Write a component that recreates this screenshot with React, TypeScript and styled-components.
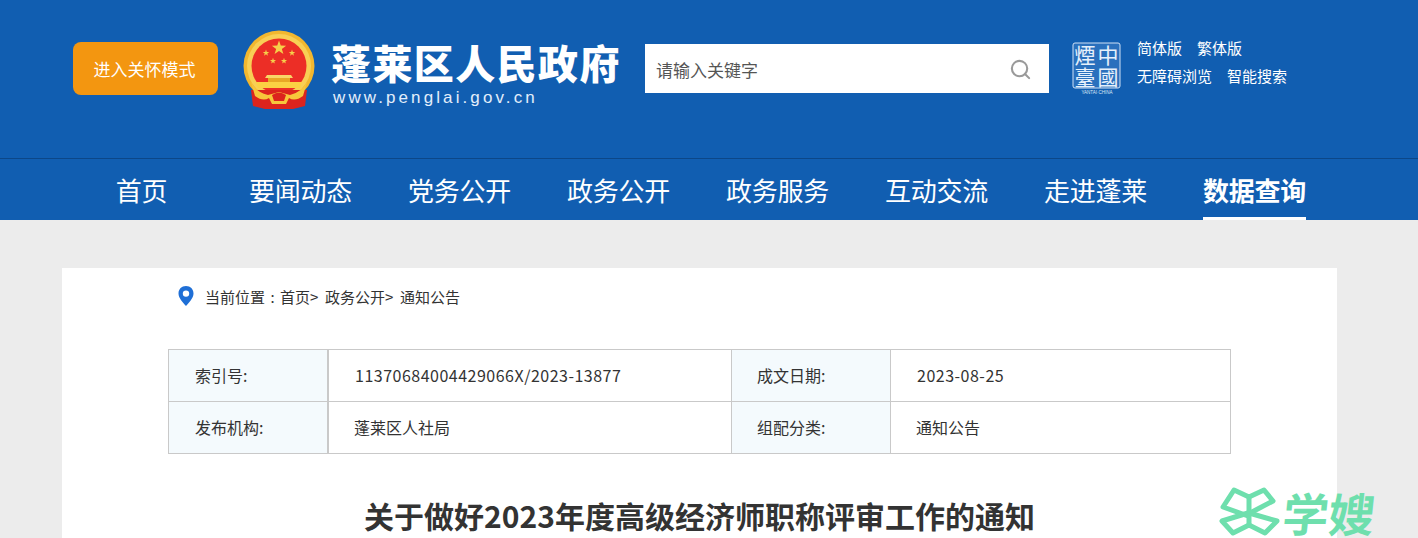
import styled, { createGlobalStyle } from "styled-components";
import { Search } from "lucide-react";

const GlobalStyle = createGlobalStyle`
  html, body {
    margin: 0;
    padding: 0;
    height: 538px;
    overflow: hidden;
    background: #ececec;
    font-family: "Noto Sans CJK SC", "Liberation Sans", sans-serif;
  }
`;

const Page = styled.div`
  position: relative;
  width: 1418px;
  height: 538px;
  overflow: hidden;
`;

const Header = styled.header`
  height: 158px;
  box-sizing: border-box;
  background: #115eb1;
  display: flex;
  align-items: flex-start;
  padding: 30px 0 0 73px;
  color: #fff;
`;

const CareButton = styled.a`
  width: 145px;
  height: 53px;
  box-sizing: border-box;
  margin-top: 12px;
  padding-right: 2px;
  border-radius: 8px;
  background: #f39610;
  display: flex;
  align-items: center;
  justify-content: center;
  font-size: 17px;
  color: #fff;
`;

const Emblem = styled.svg`
  width: 74px;
  height: 80px;
  margin: 0 0 0 25px;
  flex: none;
`;

const Brand = styled.div`
  margin: 7px 0 0 14px;
  width: 314px;
  flex: none;
`;

const BrandName = styled.div`
  font-size: 40px;
  line-height: 50px;
  font-weight: 900;
  letter-spacing: 1.4px;
  white-space: nowrap;
`;

const BrandUrl = styled.div`
  font-family: "Liberation Sans", sans-serif;
  font-size: 17px;
  line-height: 20px;
  letter-spacing: 3.1px;
  margin: 1px 0 0 2px;
  color: #e3eefb;
  white-space: nowrap;
`;

const SearchBox = styled.div`
  width: 404px;
  height: 49px;
  margin: 14px 0 0 0;
  box-sizing: border-box;
  background: #fff;
  display: flex;
  align-items: center;
  justify-content: space-between;
  padding: 2px 17px 0 11px;
  font-size: 17px;
  color: #555;
  flex: none;
`;

const Seal = styled.svg`
  width: 50px;
  height: 54px;
  margin: 12px 0 0 23px;
  flex: none;
`;

const QuickLinks = styled.div`
  margin: 7px 0 0 15px;
  display: flex;
  flex-direction: column;
  gap: 7px;
`;

const LinkRow = styled.div`
  display: flex;
  gap: 15px;
  font-size: 15px;
  line-height: 21px;
`;

const NavBar = styled.nav`
  height: 62px;
  box-sizing: border-box;
  border-top: 1px solid #0c4788;
  background: #115eb1;
  display: flex;
  padding-left: 62px;
`;

const NavItem = styled.div`
  width: 159px;
  display: flex;
  justify-content: center;
`;

const NavLabel = styled.a<{ $active?: boolean }>`
  height: 61px;
  box-sizing: border-box;
  font-size: 26px;
  line-height: 62px;
  letter-spacing: -0.3px;
  color: #fff;
  font-weight: ${(p) => (p.$active ? 700 : 400)};
  border-bottom: 3px solid ${(p) => (p.$active ? "#fff" : "transparent")};
`;

const Card = styled.main`
  margin: 48px 0 0 62px;
  width: 1275px;
  height: 400px;
  box-sizing: border-box;
  background: #fff;
  padding: 15px 106px 0;
`;

const Crumbs = styled.div`
  display: flex;
  align-items: center;
  height: 26px;
  font-size: 15px;
  color: #333;
  white-space: nowrap;
`;

const CrumbSep = styled.span`
  width: 15px;
  flex: none;
`;

const CrumbColon = styled.span`
  width: 15px;
  flex: none;
  text-align: center;
`;

const PinIcon = styled.svg`
  width: 16px;
  height: 20px;
  margin: 0 11px 0 10px;
  flex: none;
`;

const InfoTable = styled.div`
  margin-top: 40px;
  width: 1063px;
  box-sizing: border-box;
  border: 1px solid #c9c9c9;
  border-bottom: 0;
  display: grid;
  grid-template-columns: 160px 403px 159px 1fr;
  grid-auto-rows: 52px;
  font-size: 16px;
  color: #333;
`;

const Cell = styled.div<{ $head?: boolean; $last?: boolean }>`
  box-sizing: border-box;
  display: flex;
  align-items: center;
  padding: 0 0 2px ${(p) => (p.$head ? "26px" : "25px")};
  border-bottom: 1px solid #c9c9c9;
  border-right: ${(p) => (p.$last ? "0" : p.$head ? "2px solid #c9c9c9" : "1px solid #c9c9c9")};
  background: ${(p) => (p.$head ? "#f4fafd" : "#fff")};
`;

const SideHead = styled(Cell)`
  border-right-width: 1px;
  padding-left: 25px;
`;

const Code = styled.span`
  letter-spacing: 0.5px;
  margin-left: 1px;
`;

const Title = styled.h1`
  margin: 41px 0 0;
  text-align: center;
  font-size: 30px;
  line-height: 40px;
  font-weight: 700;
  color: #333;
  white-space: nowrap;
`;

const Watermark = styled.div`
  position: absolute;
  left: 1219px;
  top: 486px;
  width: 160px;
  height: 52px;
  display: flex;
  color: #6edfad;
`;

const WatermarkMark = styled.svg`
  width: 62px;
  height: 52px;
  flex: none;
`;

const WatermarkText = styled.div`
  font-size: 46px;
  line-height: 52px;
  font-weight: 700;
  margin-left: 2px;
  transform: skewX(-6deg);
  white-space: nowrap;
`;

const Star = ({ x, y, r }: { x: number; y: number; r: number }) => {
  const pts = Array.from({ length: 10 }, (_, i) => {
    const a = -Math.PI / 2 + (i * Math.PI) / 5;
    const d = i % 2 ? r * 0.4 : r;
    return `${(x + d * Math.cos(a)).toFixed(2)},${(y + d * Math.sin(a)).toFixed(2)}`;
  }).join(" ");
  return <polygon points={pts} fill="#f6cf4a" />;
};

const App = () => {
  return (
    <Page>
      <GlobalStyle />
      <Header>
        <CareButton>进入关怀模式</CareButton>
        <Emblem viewBox="0 0 74 80">
          <circle cx="36" cy="36" r="35.5" fill="#f2b72f" />
          <circle cx="36" cy="36" r="32" fill="#f8cf55" />
          <circle cx="36" cy="36" r="27.5" fill="#ec2e26" />
          <Star x={36} y={18} r={7.5} />
          <Star x={23} y={23} r={3.4} />
          <Star x={49} y={23} r={3.4} />
          <Star x={30} y={31} r={3.2} />
          <Star x={41} y={31} r={3.2} />
          <path d="M24 45 H48 L50 48 H22 Z" fill="#f9d667" />
          <rect x="25" y="48" width="22" height="4" fill="#e8a826" />
          <path d="M13 52 H59 L57 58 H15 Z" fill="#fbd143" />
          <path d="M8 60 H64 L62 76 L50 79 H22 L10 76 Z" fill="#dc241d" />
          <path d="M8 52 Q13 62 25 65 L36 62 L47 65 Q59 62 64 52 L60 66 Q52 72 46 68 L43 74 H29 L26 68 Q20 72 12 66 Z" fill="#f7c63b" />
          <path d="M29 65 Q36 60 43 65 L41 71 H31 Z" fill="#dc241d" />
        </Emblem>
        <Brand>
          <BrandName>蓬莱区人民政府</BrandName>
          <BrandUrl>www.penglai.gov.cn</BrandUrl>
        </Brand>
        <SearchBox>
          请输入关键字
          <Search size={23} color="#9a9a9a" strokeWidth={2.2} />
        </SearchBox>
        <Seal viewBox="0 0 50 54">
          <rect x="1" y="1" width="47" height="45" rx="2" fill="#2a70bd" stroke="#cfe0f5" strokeWidth="1" />
          <g fill="#e6f0fb" fontSize="21" textAnchor="middle" fontFamily="Noto Sans CJK TC">
            <text x="13" y="21">煙</text>
            <text x="36" y="21">中</text>
            <text x="13" y="43">臺</text>
            <text x="36" y="43">國</text>
          </g>
          <text x="25" y="52" fill="#dce9f8" fontSize="4.5" textAnchor="middle" fontFamily="Liberation Sans">
            YANTAI·CHINA
          </text>
        </Seal>
        <QuickLinks>
          <LinkRow>
            <span>简体版</span>
            <span>繁体版</span>
          </LinkRow>
          <LinkRow>
            <span>无障碍浏览</span>
            <span>智能搜索</span>
          </LinkRow>
        </QuickLinks>
      </Header>
      <NavBar>
        {["首页", "要闻动态", "党务公开", "政务公开", "政务服务", "互动交流", "走进蓬莱", "数据查询"].map((name, i) => (
          <NavItem key={name}>
            <NavLabel $active={i === 7}>{name}</NavLabel>
          </NavItem>
        ))}
      </NavBar>
      <Card>
        <Crumbs>
          <PinIcon viewBox="0 0 16 20">
            <path
              fillRule="evenodd"
              d="M8 0 C3.6 0 0.5 3.2 0.5 7.4 C0.5 12 5 16.6 8 20 C11 16.6 15.5 12 15.5 7.4 C15.5 3.2 12.4 0 8 0 Z M8 4.4 A3.2 3.2 0 1 1 8 10.8 A3.2 3.2 0 1 1 8 4.4 Z"
              fill="#1f6fd6"
            />
          </PinIcon>
          当前位置<CrumbColon>:</CrumbColon>首页<CrumbSep>&gt;</CrumbSep>政务公开<CrumbSep>&gt;</CrumbSep>通知公告
        </Crumbs>
        <InfoTable>
          <Cell $head>索引号:</Cell>
          <Cell><Code>11370684004429066X/2023-13877</Code></Cell>
          <SideHead $head>成文日期:</SideHead>
          <Cell $last><Code>2023-08-25</Code></Cell>
          <Cell $head>发布机构:</Cell>
          <Cell>蓬莱区人社局</Cell>
          <SideHead $head>组配分类:</SideHead>
          <Cell $last>通知公告</Cell>
        </InfoTable>
        <Title>关于做好2023年度高级经济师职称评审工作的通知</Title>
      </Card>
      <Watermark>
        <WatermarkMark viewBox="0 0 62 52">
          <g fill="none" stroke="currentColor" strokeWidth="5" strokeLinejoin="round">
            <path d="M29 30 L4 21 L15 4 L30 11 L45 4 L54 15 L31 27" />
            <path d="M30 27 L58 35 L46 47 L30 39 L14 47 L3 35 L29 27" />
            <path d="M30 10 V42" />
          </g>
        </WatermarkMark>
        <WatermarkText>学嫂</WatermarkText>
      </Watermark>
    </Page>
  );
};

export default App;
